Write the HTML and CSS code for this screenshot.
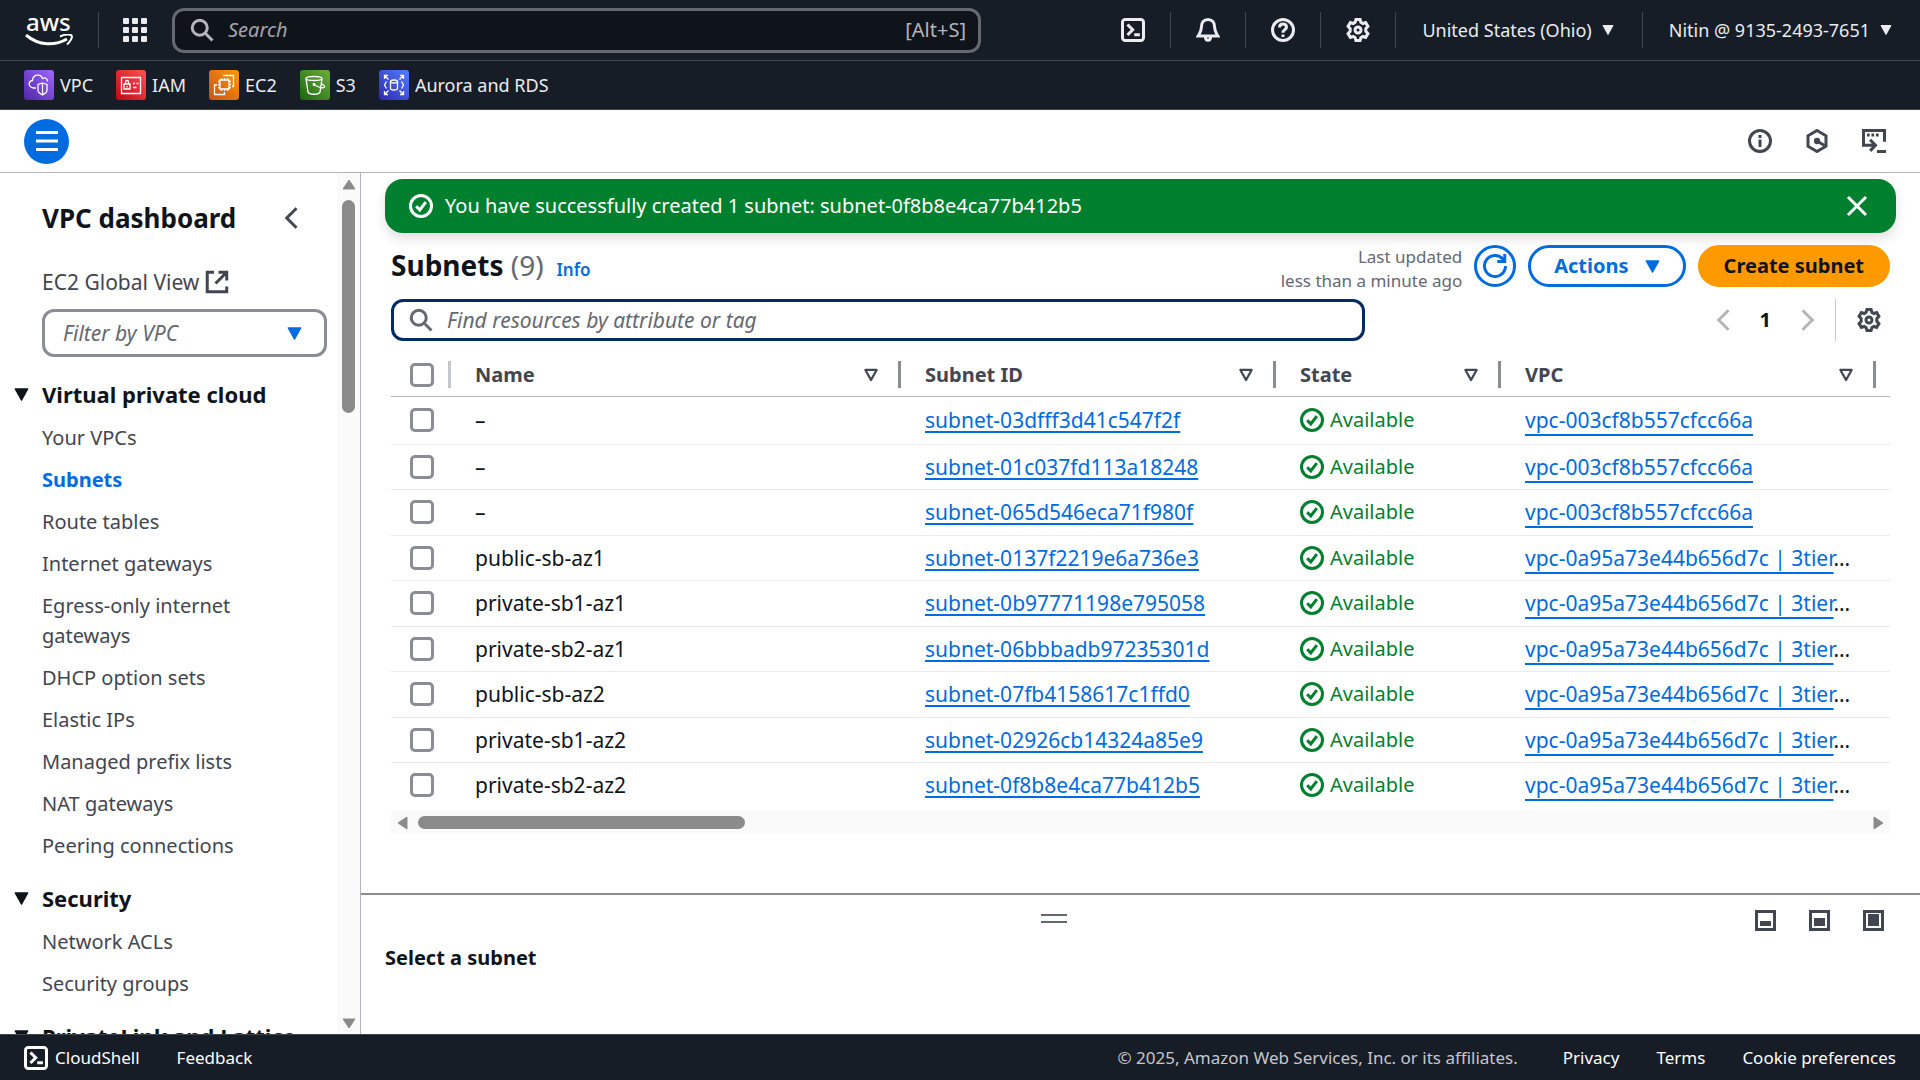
FILE: index.html
```html
<!DOCTYPE html>
<html lang="en">
<head>
    <meta charset="utf-8">
    <title>Subnets | VPC Console</title>
    <link rel="stylesheet" href="styles.css">
</head>
<body>
    <svg class="defs" aria-hidden="true">
        <symbol id="i-search" viewBox="0 0 16 16"><circle cx="6.5" cy="6.5" r="5"/><path d="M10.2 10.2l4.8 4.8"/></symbol>
        <symbol id="i-shell" viewBox="0 0 16 16"><rect x="1" y="1" width="14" height="14" rx="1.8"/><path d="M4.3 4.3L7.8 7.8l-3.5 3.5M8.8 11.2h3.8"/></symbol>
        <symbol id="i-bell" viewBox="0 0 16 16"><path d="M8 1C5.200 1 3.600 3 3.600 6C3.600 9 2.700 9.800 1.400 12H14.600C13.300 9.800 12.400 9 12.400 6C12.400 3 10.800 1 8 1z"/><path d="M6.300 12.500C6.300 14.100 7 14.900 8 14.900S9.700 14.100 9.700 12.500"/></symbol>
        <symbol id="i-help" viewBox="0 0 16 16"><circle cx="8" cy="8" r="7"/><path d="M5.700 6.300C5.700 4.800 6.700 4 8 4S10.300 4.800 10.300 6.100C10.300 7.800 8 7.800 8 9.800M8 11v1.700"/></symbol>
        <symbol id="i-gear" viewBox="0 0 16 16"><path d="M6.600 1h2.800l.5 1.900 1.300.8 1.900-.6 1.500 2.500-1.400 1.500v1.800l1.400 1.500-1.500 2.500-1.900-.6-1.300.8-.5 1.900H6.600l-.5-1.900-1.300-.8-1.900.6-1.500-2.500 1.400-1.500V7.100L1.400 5.600l1.500-2.500 1.900.6 1.300-.8z"/><circle cx="8" cy="8" r="2"/></symbol>
        <symbol id="i-info" viewBox="0 0 16 16"><circle cx="8" cy="8" r="7"/><path d="M8 4v2M8 7v5"/></symbol>
        <symbol id="i-hex" viewBox="0 0 16 16"><path d="M8 1l6 3.500v7L8 15l-6-3.500v-7z"/><circle class="solid" cx="8" cy="8" r="1.600"/><path d="M8 8l5 3"/></symbol>
        <symbol id="i-term" viewBox="0 0 16 16"><path d="M15 8.500V1H1v9.800h7M5.400 7.200L9 10.900l-3.600 3.700M10 15h6"/><path d="M3.300 4h1.800M6.300 4h1.800M9.300 4h1.800"/></symbol>
        <symbol id="i-left" viewBox="0 0 16 16"><path d="M11 1.500L4.500 8l6.500 6.500"/></symbol>
        <symbol id="i-right" viewBox="0 0 16 16"><path d="M5 1.500L11.500 8 5 14.500"/></symbol>
        <symbol id="i-ext" viewBox="0 0 16 16"><path d="M6 1.500H1.500v13h13V11M9 1.500h5.500V7M14 2L7 9"/></symbol>
        <symbol id="i-check" viewBox="0 0 16 16"><circle cx="8" cy="8" r="7"/><path d="M4.800 8.200l2.400 2.400 4-5.200"/></symbol>
        <symbol id="i-close" viewBox="0 0 16 16"><path d="M2 2l12 12M14 2L2 14"/></symbol>
        <symbol id="i-refresh" viewBox="0 0 16 16"><path d="M15 8A7 7 0 1 1 13.200 3.300L14.500 5"/><path d="M14.500 0v5H9.500"/></symbol>
        <symbol id="i-caret" viewBox="0 0 12 12"><path class="solid" d="M1 1.500h10L6 10.500z"/></symbol>
        <symbol id="i-sort" viewBox="0 0 16 16"><path d="M3 3.500h10L8 12.500z"/></symbol>
    </svg>

    <header class="topnav">
        <a class="logo" href="#" aria-label="AWS home">
            <span>aws</span>
            <svg viewBox="0 0 48 13" width="48" height="13"><path d="M1 1C14 12 30 12 42 5" fill="none" stroke="#fff" stroke-width="3"/><path d="M35 2.500C40 0 45 0 46.500 1.500S45 8 42 10.500" fill="none" stroke="#fff" stroke-width="2"/></svg>
        </a>
        <button class="apps" aria-label="All services">
            <svg viewBox="0 0 24 24" width="24" height="24" fill="#ebebf0"><rect width="6" height="6" rx="1"/><rect x="9" width="6" height="6" rx="1"/><rect x="18" width="6" height="6" rx="1"/><rect y="9" width="6" height="6" rx="1"/><rect x="9" y="9" width="6" height="6" rx="1"/><rect x="18" y="9" width="6" height="6" rx="1"/><rect y="18" width="6" height="6" rx="1"/><rect x="9" y="18" width="6" height="6" rx="1"/><rect x="18" y="18" width="6" height="6" rx="1"/></svg>
        </button>
        <label class="topsearch">
            <svg class="icon"><use href="#i-search"/></svg>
            <input type="search" placeholder="Search" aria-label="Search">
            <span>[Alt+S]</span>
        </label>
        <nav class="toolbar">
            <button aria-label="CloudShell"><svg class="icon"><use href="#i-shell"/></svg></button>
            <button aria-label="Notifications"><svg class="icon"><use href="#i-bell"/></svg></button>
            <button aria-label="Help"><svg class="icon"><use href="#i-help"/></svg></button>
            <button aria-label="Settings"><svg class="icon"><use href="#i-gear"/></svg></button>
            <button class="menu">United States (Ohio) <svg class="caret"><use href="#i-caret"/></svg></button>
            <button class="menu">Nitin @ 9135-2493-7651 <svg class="caret"><use href="#i-caret"/></svg></button>
        </nav>
    </header>

    <nav class="favorites">
        <a href="#"><span class="svc vpc"><svg viewBox="0 0 30 30"><path d="M12 18H9.500C4 17 4 11 8.500 10.500C9 4 17 3.500 18.500 8.500C21 7 23.500 8.500 23.500 11.500M18.500 13l4.500 1.500V20C23 22.500 20.500 24 18.500 25C16.500 24 14 22.500 14 20v-5.500zM18.500 13v12"/></svg></span>VPC</a>
        <a href="#"><span class="svc iam"><svg viewBox="0 0 30 30"><path d="M5.500 7.500h19v16h-19zM8 14h6v5H8zM9.500 14v-2c0-2 3-2 3 0v2M17 13.500h2M20.500 13.500h2M17 17.500h3.500M11 16v1.500"/></svg></span>IAM</a>
        <a href="#"><span class="svc ec2"><svg viewBox="0 0 30 30"><path d="M11 10h9v9h-9zM12.500 10V8M15.500 10V8M18.500 10V8M12.500 19v2M15.500 19v2M18.500 19v2M11 11.500H9M11 14.500H9M11 17.500H9M20 11.500h2M20 14.500h2M20 17.500h2M14.500 6V5.500h10v11H23M8 15H5.500v9.500h10V22"/></svg></span>EC2</a>
        <a href="#"><span class="svc s3"><svg viewBox="0 0 30 30"><ellipse cx="14" cy="8.500" rx="8" ry="2"/><path d="M6 8.500l2 13.500c1 3 11 3 12 0l2-13.500M14 14.500c5 3 9 4 10.500 2.500M21 13.500c3 1.500 4 3 3.500 3.500"/><circle cx="14" cy="14.500" r=".8"/></svg></span>S3</a>
        <a href="#"><span class="svc rds"><svg viewBox="0 0 30 30"><ellipse cx="15" cy="11.500" rx="3.500" ry="1.500"/><path d="M11.500 11.500v7c0 2 7 2 7 0v-7M5.500 9V5.500H9M5.500 5.500l4 4M21 5.500h3.500V9M24.500 5.500l-4 4M5.500 21v3.500H9M5.500 24.500l4-4M21 24.500h3.500V21M24.500 24.500l-4-4M7.500 11.500L5.500 15l2 3.500M22.500 11.500l2 3.500-2 3.500"/></svg></span>Aurora and RDS</a>
    </nav>

    <div class="crumbbar">
        <button class="burger" aria-label="Open menu"><svg viewBox="0 0 24 24" width="24" height="24"><path d="M1 3.500h22M1 12h22M1 20.500h22" stroke="#fff" stroke-width="3"/></svg></button>
        <div class="tools">
            <button aria-label="Info"><svg class="icon"><use href="#i-info"/></svg></button>
            <button aria-label="Amazon Q"><svg class="icon"><use href="#i-hex"/></svg></button>
            <button aria-label="Console to code"><svg class="icon"><use href="#i-term"/></svg></button>
        </div>
    </div>

    <div class="layout">
        <aside class="sidebar">
            <div class="side-content">
                <div class="side-head">
                    <h2>VPC dashboard</h2>
                    <button aria-label="Close navigation"><svg class="icon"><use href="#i-left"/></svg></button>
                </div>
                <a class="global" href="#">EC2 Global View <svg class="icon"><use href="#i-ext"/></svg></a>
                <div class="filter">
                    <select aria-label="Filter by VPC"><option>Filter by VPC</option></select>
                    <svg class="caret"><use href="#i-caret"/></svg>
                </div>
                <h3><svg class="caret"><use href="#i-caret"/></svg>Virtual private cloud</h3>
                <ul>
                    <li><a href="#">Your VPCs</a></li>
                    <li><a class="active" href="#">Subnets</a></li>
                    <li><a href="#">Route tables</a></li>
                    <li><a href="#">Internet gateways</a></li>
                    <li><a href="#">Egress-only internet gateways</a></li>
                    <li><a href="#">DHCP option sets</a></li>
                    <li><a href="#">Elastic IPs</a></li>
                    <li><a href="#">Managed prefix lists</a></li>
                    <li><a href="#">NAT gateways</a></li>
                    <li><a href="#">Peering connections</a></li>
                </ul>
                <h3><svg class="caret"><use href="#i-caret"/></svg>Security</h3>
                <ul>
                    <li><a href="#">Network ACLs</a></li>
                    <li><a href="#">Security groups</a></li>
                </ul>
                <h3><svg class="caret"><use href="#i-caret"/></svg>PrivateLink and Lattice</h3>
            </div>
            <div class="vscroll">
                <svg viewBox="0 0 14 11" width="14" height="11"><path d="M7 1l6 9H1z"/></svg>
                <div class="thumb"></div>
                <svg viewBox="0 0 14 11" width="14" height="11"><path d="M7 10L1 1h12z"/></svg>
            </div>
        </aside>

        <main>
            <section class="content">
                <div class="flash" role="status">
                    <svg class="icon"><use href="#i-check"/></svg>
                    <span>You have successfully created 1 subnet: subnet-0f8b8e4ca77b412b5</span>
                    <button aria-label="Dismiss"><svg class="icon"><use href="#i-close"/></svg></button>
                </div>
                <div class="list">
                    <div class="list-head">
                        <h1>Subnets <span>(9)</span></h1>
                        <a class="infolink" href="#">Info</a>
                        <p class="updated">Last updated<br>less than a minute ago</p>
                        <button class="btn round" aria-label="Refresh"><svg class="icon"><use href="#i-refresh"/></svg></button>
                        <button class="btn">Actions <svg class="caret"><use href="#i-caret"/></svg></button>
                        <button class="btn primary">Create subnet</button>
                    </div>
                    <div class="list-filter">
                        <label class="find">
                            <svg class="icon"><use href="#i-search"/></svg>
                            <input type="text" placeholder="Find resources by attribute or tag" aria-label="Find resources">
                        </label>
                        <div class="pages">
                            <button aria-label="Previous page" disabled><svg class="icon"><use href="#i-left"/></svg></button>
                            <button class="current">1</button>
                            <button aria-label="Next page" disabled><svg class="icon"><use href="#i-right"/></svg></button>
                            <button class="prefs" aria-label="Preferences"><svg class="icon"><use href="#i-gear"/></svg></button>
                        </div>
                    </div>
                    <table>
                        <colgroup><col class="c-check"><col class="c-name"><col class="c-id"><col class="c-state"><col class="c-vpc"><col></colgroup>
                        <thead>
                            <tr>
                                <th class="pick"><div><input type="checkbox" aria-label="Select all"></div></th>
                                <th><div>Name<svg class="sort"><use href="#i-sort"/></svg></div></th>
                                <th><div>Subnet ID<svg class="sort"><use href="#i-sort"/></svg></div></th>
                                <th><div>State<svg class="sort"><use href="#i-sort"/></svg></div></th>
                                <th><div>VPC<svg class="sort"><use href="#i-sort"/></svg></div></th>
                                <th></th>
                            </tr>
                        </thead>
                        <tbody>
                            <tr><td class="pick"><input type="checkbox" aria-label="Select row"></td><td>–</td><td><a href="#">subnet-03dfff3d41c547f2f</a></td><td><span class="ok"><svg class="icon"><use href="#i-check"/></svg>Available</span></td><td class="vpcid"><a href="#">vpc-003cf8b557cfcc66a</a></td><td></td></tr>
                            <tr><td class="pick"><input type="checkbox" aria-label="Select row"></td><td>–</td><td><a href="#">subnet-01c037fd113a18248</a></td><td><span class="ok"><svg class="icon"><use href="#i-check"/></svg>Available</span></td><td class="vpcid"><a href="#">vpc-003cf8b557cfcc66a</a></td><td></td></tr>
                            <tr><td class="pick"><input type="checkbox" aria-label="Select row"></td><td>–</td><td><a href="#">subnet-065d546eca71f980f</a></td><td><span class="ok"><svg class="icon"><use href="#i-check"/></svg>Available</span></td><td class="vpcid"><a href="#">vpc-003cf8b557cfcc66a</a></td><td></td></tr>
                            <tr><td class="pick"><input type="checkbox" aria-label="Select row"></td><td>public-sb-az1</td><td><a href="#">subnet-0137f2219e6a736e3</a></td><td><span class="ok"><svg class="icon"><use href="#i-check"/></svg>Available</span></td><td class="vpcid"><a href="#">vpc-0a95a73e44b656d7c | 3tier</a>…</td><td></td></tr>
                            <tr><td class="pick"><input type="checkbox" aria-label="Select row"></td><td>private-sb1-az1</td><td><a href="#">subnet-0b97771198e795058</a></td><td><span class="ok"><svg class="icon"><use href="#i-check"/></svg>Available</span></td><td class="vpcid"><a href="#">vpc-0a95a73e44b656d7c | 3tier</a>…</td><td></td></tr>
                            <tr><td class="pick"><input type="checkbox" aria-label="Select row"></td><td>private-sb2-az1</td><td><a href="#">subnet-06bbbadb97235301d</a></td><td><span class="ok"><svg class="icon"><use href="#i-check"/></svg>Available</span></td><td class="vpcid"><a href="#">vpc-0a95a73e44b656d7c | 3tier</a>…</td><td></td></tr>
                            <tr><td class="pick"><input type="checkbox" aria-label="Select row"></td><td>public-sb-az2</td><td><a href="#">subnet-07fb4158617c1ffd0</a></td><td><span class="ok"><svg class="icon"><use href="#i-check"/></svg>Available</span></td><td class="vpcid"><a href="#">vpc-0a95a73e44b656d7c | 3tier</a>…</td><td></td></tr>
                            <tr><td class="pick"><input type="checkbox" aria-label="Select row"></td><td>private-sb1-az2</td><td><a href="#">subnet-02926cb14324a85e9</a></td><td><span class="ok"><svg class="icon"><use href="#i-check"/></svg>Available</span></td><td class="vpcid"><a href="#">vpc-0a95a73e44b656d7c | 3tier</a>…</td><td></td></tr>
                            <tr><td class="pick"><input type="checkbox" aria-label="Select row"></td><td>private-sb2-az2</td><td><a href="#">subnet-0f8b8e4ca77b412b5</a></td><td><span class="ok"><svg class="icon"><use href="#i-check"/></svg>Available</span></td><td class="vpcid"><a href="#">vpc-0a95a73e44b656d7c | 3tier</a>…</td><td></td></tr>
                        </tbody>
                    </table>
                    <div class="hscroll">
                        <svg viewBox="0 0 11 14" width="11" height="14"><path d="M1 7l9-6v12z"/></svg>
                        <div class="thumb"></div>
                        <svg viewBox="0 0 11 14" width="11" height="14"><path d="M10 7L1 13V1z"/></svg>
                    </div>
                </div>
            </section>
            <section class="split">
                <div class="split-bar">
                    <button class="grip" aria-label="Resize panel"><svg viewBox="0 0 26 10" width="26" height="10"><path d="M0 1h26M0 8h26" stroke="#656871" stroke-width="2"/></svg></button>
                    <button aria-label="Small panel"><svg class="size" viewBox="0 0 21 21"><path d="M1.500 1.500h18v18h-18z"/><rect x="5" y="11" width="11" height="5"/></svg></button>
                    <button aria-label="Medium panel"><svg class="size" viewBox="0 0 21 21"><path d="M1.500 1.500h18v18h-18z"/><rect x="5" y="8" width="11" height="8"/></svg></button>
                    <button aria-label="Full panel"><svg class="size" viewBox="0 0 21 21"><path d="M1.500 1.500h18v18h-18z"/><rect x="5" y="4" width="11" height="12"/></svg></button>
                </div>
                <h2>Select a subnet</h2>
            </section>
        </main>
    </div>

    <footer>
        <a class="shell" href="#"><svg class="icon"><use href="#i-shell"/></svg>CloudShell</a>
        <a href="#">Feedback</a>
        <span class="copy">© 2025, Amazon Web Services, Inc. or its affiliates.</span>
        <a href="#">Privacy</a>
        <a href="#">Terms</a>
        <a href="#">Cookie preferences</a>
    </footer>
</body>
</html>
```
FILE: styles.css
```css
* {
    box-sizing: border-box;
}
body {
    margin: 0;
    height: 100vh;
    display: flex;
    flex-direction: column;
    overflow: hidden;
    font-family: "Noto Sans", "Open Sans", sans-serif;
    font-size: 20px;
    line-height: 30px;
    color: #0f141a;
    background: #fff;
}
h1, h2, h3, p, ul {
    margin: 0;
    padding: 0;
}
a {
    color: #006ce0;
    text-decoration: none;
}
button {
    font: inherit;
    color: inherit;
    background: none;
    border: 0;
    padding: 0;
    display: flex;
    align-items: center;
    cursor: pointer;
}
input, select {
    font: inherit;
    color: inherit;
    background: none;
    border: 0;
    outline: none;
    padding: 0;
}
.defs {
    position: absolute;
    width: 0;
    height: 0;
}
.icon {
    flex: none;
    width: 24px;
    height: 24px;
    fill: none;
    stroke: currentColor;
    stroke-width: 2;
}
.solid {
    fill: currentColor;
    stroke: currentColor;
    stroke-width: 1;
    stroke-linejoin: round;
}
.caret {
    flex: none;
    width: 15px;
    height: 15px;
}

/* top navigation */
.topnav {
    flex: none;
    height: 61px;
    display: flex;
    align-items: center;
    background: #161d26;
    border-bottom: 1px solid #424650;
    color: #ebebf0;
    font-size: 18px;
}
.logo {
    width: 99px;
    height: 36px;
    padding-left: 25px;
    border-right: 1px solid #424650;
    display: flex;
    flex-direction: column;
    color: #fff;
}
.logo span {
    padding-left: 1px;
    font-size: 24px;
    font-weight: 500;
    line-height: 20px;
}
.logo svg {
    margin-top: 2px;
}
.apps {
    margin: 0 25px 0 24px;
}
.topsearch {
    flex: 0 1 809px;
    height: 45px;
    padding: 0 12px 0 15px;
    display: flex;
    align-items: center;
    gap: 14px;
    background: #0f141a;
    border: 3px solid #656871;
    border-radius: 12px;
    color: #b4b4bb;
    font-size: 20px;
}
.topsearch input {
    flex: 1;
    min-width: 0;
}
::placeholder {
    color: #a4a4ad;
    font-style: italic;
    opacity: 1;
}
.toolbar {
    margin-left: auto;
    display: flex;
}
.toolbar button {
    height: 36px;
    padding: 0 25px;
    border-right: 1px solid #424650;
}
.toolbar .menu {
    padding: 0 28px 0 26px;
    gap: 10px;
    white-space: nowrap;
}
.toolbar .menu:last-child {
    border: 0;
}
.toolbar .caret {
    width: 12px;
    height: 12px;
}
.favorites {
    flex: none;
    height: 49px;
    padding: 0 24px;
    display: flex;
    align-items: center;
    gap: 23px;
    background: #161d26;
    border-bottom: 1px solid #424650;
    font-size: 18px;
}
.favorites a {
    display: flex;
    align-items: center;
    gap: 6px;
    color: #ebebf0;
}
.svc {
    width: 30px;
    height: 30px;
    border-radius: 3px;
    overflow: hidden;
}
.svc svg {
    display: block;
    fill: none;
    stroke: #fff;
    stroke-width: 1.3;
}
.vpc { background: linear-gradient(45deg, #4d27a8, #a166ff); }
.iam { background: linear-gradient(45deg, #bd0816, #ff5252); }
.ec2 { background: linear-gradient(45deg, #c8511b, #ff9900); }
.s3 { background: linear-gradient(45deg, #1b660f, #6cae3e); }
.rds { background: linear-gradient(45deg, #2e27ad, #527fff); }

.crumbbar {
    flex: none;
    height: 63px;
    padding: 0 34px 0 24px;
    display: flex;
    align-items: center;
    justify-content: space-between;
    border-bottom: 1px solid #b4b4bb;
}
.burger {
    width: 45px;
    height: 45px;
    justify-content: center;
    border-radius: 50%;
    background: #006ce0;
}
.tools {
    display: flex;
    gap: 33px;
    color: #424650;
}

/* side navigation */
.layout {
    flex: 1;
    min-height: 0;
    display: flex;
}
.sidebar {
    flex: none;
    width: 361px;
    display: flex;
    overflow: hidden;
    border-right: 1px solid #b4b4bb;
}
.side-content {
    flex: 1;
    padding: 27px 10px 0 42px;
    overflow: hidden;
}
.side-head {
    height: 36px;
    padding-right: 23px;
    display: flex;
    align-items: center;
    justify-content: space-between;
}
.side-head h2 {
    font-size: 26px;
}
.side-head .icon {
    color: #424650;
}
.global {
    margin: 31px 0 12px;
    display: flex;
    align-items: center;
    gap: 6px;
    color: #424650;
    font-size: 21px;
}
.filter {
    height: 48px;
    display: flex;
    align-items: center;
    border: 3px solid #8c8c94;
    border-radius: 12px;
    color: #006ce0;
    padding: 0 22px 0 18px;
    font-size: 21px;
}
.filter select {
    flex: 1;
    appearance: none;
    color: #656871;
    font-style: italic;
}
.side-content h3 {
    margin: 22px 0 14px -28px;
    display: flex;
    align-items: center;
    gap: 13px;
    font-size: 22px;
    white-space: nowrap;
}
.side-content ul {
    list-style: none;
}
.side-content li {
    margin-bottom: 12px;
}
.side-content li a {
    display: block;
    max-width: 240px;
    color: #424650;
}
.side-content li .active {
    color: #006ce0;
    font-weight: 700;
}
.vscroll {
    width: 23px;
    padding: 6px 0 5px;
    display: flex;
    flex-direction: column;
    align-items: center;
    background: #fafafa;
}
.vscroll svg, .hscroll svg {
    flex: none;
    fill: #8b8b8b;
    stroke: #8b8b8b;
    stroke-linejoin: round;
}
.thumb {
    border-radius: 7px;
    background: #8b8b8b;
}
.vscroll .thumb {
    width: 13px;
    height: 25%;
    margin: 10px 0 auto;
}

/* resource list */
main {
    flex: 1;
    min-width: 0;
    display: flex;
    flex-direction: column;
}
.content {
    flex: 1;
    padding: 6px 24px 0;
}
.flash {
    height: 54px;
    padding: 0 27px 0 24px;
    display: flex;
    align-items: center;
    gap: 12px;
    border-radius: 18px;
    background: #00802f;
    color: #fff;
    box-shadow: 0 6px 12px rgba(0, 7, 22, .12);
}
.flash button {
    margin-left: auto;
}
.list {
    padding: 12px 6px 0;
}
.list-head {
    height: 54px;
    display: flex;
    align-items: flex-start;
}
h1 {
    font-size: 28px;
    line-height: 40px;
}
h1 span {
    color: #656871;
    font-weight: 400;
}
.infolink {
    margin-left: 13px;
    font-size: 17px;
    font-weight: 600;
    line-height: 50px;
}
.updated {
    margin-left: auto;
    margin-right: 12px;
    color: #656871;
    font-size: 17px;
    line-height: 24px;
    text-align: right;
}
.btn {
    height: 42px;
    padding: 0 23px;
    gap: 16px;
    border: 3px solid #006ce0;
    border-radius: 21px;
    color: #006ce0;
    font-weight: 700;
}
.btn + .btn {
    margin-left: 12px;
}
.btn.round {
    width: 42px;
    padding: 0;
    justify-content: center;
}
.btn.primary {
    border-color: #ff9900;
    background: #ff9900;
    color: #0f141a;
}
.list-filter {
    display: flex;
    justify-content: space-between;
}
.find {
    flex: 0 1 65%;
    height: 42px;
    padding: 0 15px;
    display: flex;
    align-items: center;
    gap: 14px;
    border: 3px solid #002b66;
    border-radius: 12px;
    color: #656871;
    font-size: 21px;
}
.find input {
    flex: 1;
}
.find ::placeholder {
    color: #656871;
}
.pages {
    display: flex;
    align-items: center;
    gap: 24px;
    padding-right: 9px;
    color: #424650;
}
.pages button:disabled {
    color: #b4b4bb;
}
.pages .current {
    color: #0f141a;
    font-weight: 700;
}
.pages .prefs {
    height: 42px;
    padding-left: 21px;
    margin-left: -8px;
    border-left: 1px solid #c6c6cd;
}
table {
    width: 100%;
    margin-top: 12px;
    table-layout: fixed;
    border-collapse: separate;
    border-spacing: 0;
}
.c-check { width: 59px; }
.c-name { width: 450px; }
.c-id { width: 375px; }
.c-state { width: 225px; }
.c-vpc { width: 375px; }
th {
    height: 44px;
    padding: 0;
    border-bottom: 1px solid #b4b4bb;
    color: #424650;
    text-align: left;
}
th div {
    height: 27px;
    margin-right: -1px;
    padding: 0 18px 0 25px;
    display: flex;
    align-items: center;
    justify-content: space-between;
    border-right: 3px solid #8c8c94;
}
th.pick div {
    padding: 0 0 0 19px;
    border-color: #c6c6cd;
}
.sort {
    width: 18px;
    height: 18px;
    fill: none;
    stroke: #424650;
    stroke-width: 2;
    stroke-linejoin: round;
}
td {
    height: 46px;
    padding: 0 0 1px 25px;
    border-bottom: 1px solid #ebebf0;
    font-size: 21px;
    white-space: nowrap;
}
tr:nth-child(even) td {
    height: 45px;
}
tbody tr:first-child td {
    height: 48px;
}
tbody tr:last-child td {
    border-color: transparent;
}
td.pick {
    padding-left: 19px;
}
td a {
    text-decoration: underline;
    text-decoration-thickness: 2px;
    text-underline-offset: 3px;
}
.vpcid a {
    text-underline-offset: 6px;
}
input[type=checkbox] {
    appearance: none;
    display: block;
    flex: none;
    width: 24px;
    height: 24px;
    margin: 0;
    border: 3px solid #8c8c94;
    border-radius: 5px;
}
.ok {
    display: flex;
    align-items: center;
    gap: 6px;
    color: #00802f;
    font-size: 20px;
}
.hscroll {
    height: 23px;
    margin-top: 2px;
    padding: 0 6px;
    display: flex;
    align-items: center;
    background: #fafafa;
}
.hscroll .thumb {
    width: 22%;
    height: 13px;
    margin: 0 auto 0 10px;
}

/* split panel */
.split {
    flex: none;
    height: 141px;
    border-top: 2px solid #8c8c94;
    padding: 15px 36px 0 24px;
}
.split-bar {
    height: 33px;
    display: flex;
    align-items: flex-start;
    gap: 33px;
}
.grip {
    flex: 1;
    justify-content: center;
    padding-top: 4px;
}
.size {
    width: 21px;
    height: 21px;
    fill: none;
    stroke: #424650;
    stroke-width: 3;
}
.size rect {
    fill: #424650;
    stroke: none;
}
.split h2 {
    font-size: 20px;
}

footer {
    flex: none;
    height: 46px;
    padding: 0 24px;
    display: flex;
    align-items: center;
    gap: 37px;
    border-top: 1px solid #424650;
    background: #161d26;
    color: #c6c6cd;
    font-size: 17px;
}
footer a {
    color: #fff;
}
footer .shell {
    display: flex;
    align-items: center;
    gap: 7px;
}
.copy {
    margin-left: auto;
    padding-right: 8px;
}
```
